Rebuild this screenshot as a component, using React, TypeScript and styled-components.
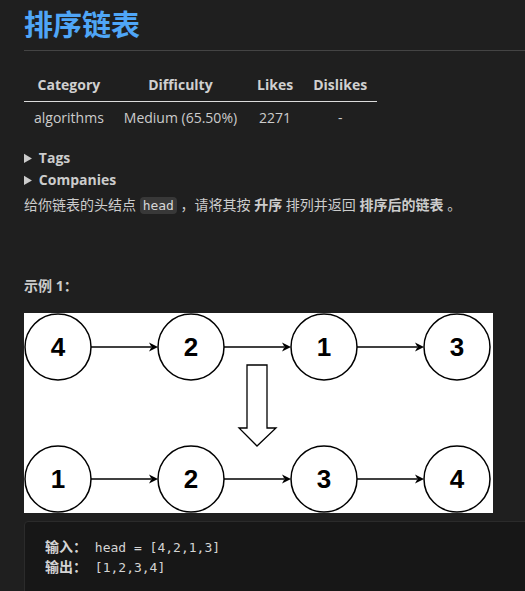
import React from 'react';
import styled, { createGlobalStyle } from 'styled-components';

const GlobalStyle = createGlobalStyle`
  html, body {
    margin: 0;
    padding: 0;
    background: #1f1f1f;
    overflow: hidden;
  }
  body {
    font-family: "Open Sans", "Noto Sans CJK SC", sans-serif;
    font-size: 14px;
    line-height: 1.6;
    color: #cccccc;
  }
`;

const Page = styled.div`
  width: 640px;
  padding: 8px 0 0 24px;
  box-sizing: border-box;
`;

const Title = styled.h1`
  margin: 0;
  padding-bottom: 8px;
  font-size: 29px;
  line-height: 34px;
  font-weight: 700;
  color: #4fa6f7;
  border-bottom: 1px solid #444444;
`;

const Table = styled.table`
  border-collapse: collapse;
  margin: 18px 0 12px;
`;

const Th = styled.th`
  padding: 5px 10px;
  text-align: center;
  font-weight: 700;
  color: #d0d0d0;
  border-bottom: 1px solid #dcdcdc;
`;

const Td = styled.td`
  padding: 5px 10px;
  text-align: center;
`;

const Details = styled.details`
  summary {
    cursor: pointer;
    font-weight: 700;
  }
`;

const Para = styled.p<{ $gap?: number }>`
  margin: ${(p) => p.$gap ?? 0}px 0 0;
`;

const InlineCode = styled.code`
  font-family: "DejaVu Sans Mono", monospace;
  font-size: 13px;
  color: #d6d6d6;
  background: #383838;
  border-radius: 4px;
  padding: 1px 3px;
`;

const Diagram = styled.div`
  margin-top: 16px;
  width: 469px;
  height: 200px;
  background: #ffffff;
  svg {
    display: block;
  }
`;

const Pre = styled.pre`
  margin: 8px 0 0;
  padding: 16px 20px;
  background: #171717;
  border: 1px solid #2b2b2b;
  border-radius: 4px;
  font-family: "DejaVu Sans Mono", "Noto Sans CJK SC", monospace;
  font-size: 13px;
  line-height: 20px;
  color: #d4d4d4;
  strong {
    font-family: "Noto Sans CJK SC", sans-serif;
    font-size: 14px;
    line-height: 1;
  }
`;

const nodeX = [34, 167, 300, 433];

const Row = ({ y, values }: { y: number; values: number[] }) => (
  <g>
    {values.map((v, i) => (
      <g key={i}>
        <circle cx={nodeX[i]} cy={y} r={33} fill="#fff" stroke="#000" strokeWidth={1.5} />
        <text
          x={nodeX[i]}
          y={y + 9}
          textAnchor="middle"
          fontFamily="Liberation Sans, Arial, sans-serif"
          fontWeight={700}
          fontSize={26}
          fill="#000"
        >
          {v}
        </text>
        {i < values.length - 1 && (
          <g>
            <line x1={nodeX[i] + 33} y1={y} x2={nodeX[i + 1] - 40} y2={y} stroke="#000" strokeWidth={1.3} />
            <path d={`M${nodeX[i + 1] - 33} ${y} l-9 -4.5 l2.5 4.5 l-2.5 4.5 z`} fill="#000" />
          </g>
        )}
      </g>
    ))}
  </g>
);

const ListDiagram = () => (
  <svg width="469" height="200" viewBox="0 0 469 200">
    <Row y={34} values={[4, 2, 1, 3]} />
    <path
      d="M223 52 H243 V115 H252 L233 133 L215 115 H223 Z"
      fill="#fff"
      stroke="#000"
      strokeWidth={1.3}
    />
    <Row y={166} values={[1, 2, 3, 4]} />
  </svg>
);

const App = () => (
  <Page>
    <GlobalStyle />
    <Title>排序链表</Title>
    <Table>
      <thead>
        <tr>
          <Th>Category</Th>
          <Th>Difficulty</Th>
          <Th>Likes</Th>
          <Th>Dislikes</Th>
        </tr>
      </thead>
      <tbody>
        <tr>
          <Td>algorithms</Td>
          <Td>Medium (65.50%)</Td>
          <Td>2271</Td>
          <Td>-</Td>
        </tr>
      </tbody>
    </Table>
    <Details>
      <summary>Tags</summary>
    </Details>
    <Details>
      <summary>Companies</summary>
    </Details>
    <Para $gap={2}>
      给你链表的头结点&nbsp;<InlineCode>head</InlineCode>&nbsp;，请将其按 <strong>升序</strong> 排列并返回{' '}
      <strong>排序后的链表</strong> 。
    </Para>
    <Para $gap={18}>&nbsp;</Para>
    <Para $gap={18}>
      <strong>示例 1：</strong>
    </Para>
    <Diagram>
      <ListDiagram />
    </Diagram>
    <Pre>
      <strong>输入：</strong> head = [4,2,1,3]
      {'\n'}
      <strong>输出：</strong> [1,2,3,4]
    </Pre>
  </Page>
);

export default App;
